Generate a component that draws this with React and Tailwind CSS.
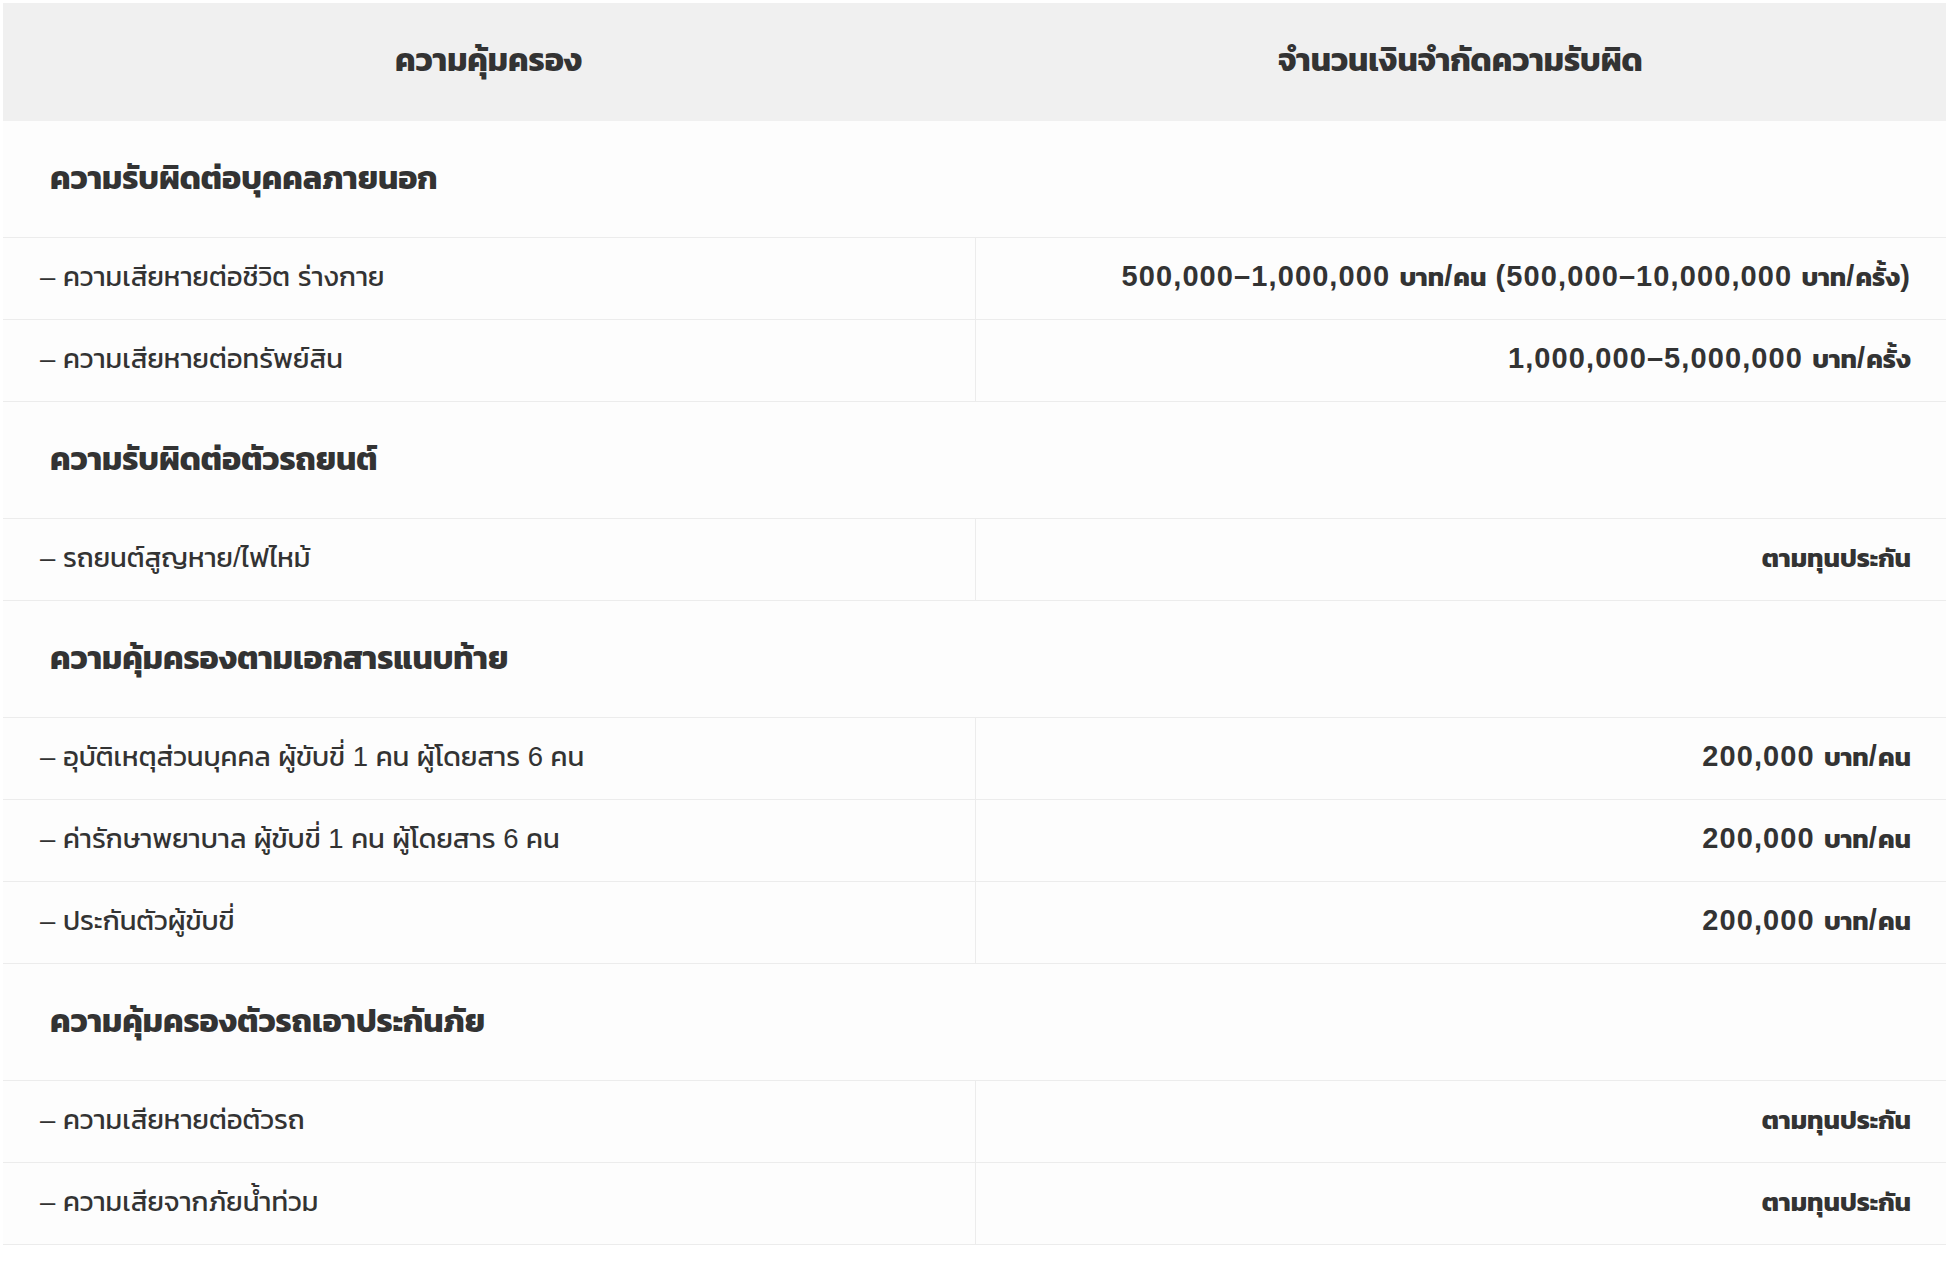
const sections = [
  {
    title: 'ความรับผิดต่อบุคคลภายนอก',
    items: [
      ['– ความเสียหายต่อชีวิต ร่างกาย', '500,000–1,000,000 บาท/คน (500,000–10,000,000 บาท/ครั้ง)'],
      ['– ความเสียหายต่อทรัพย์สิน', '1,000,000–5,000,000 บาท/ครั้ง'],
    ],
  },
  {
    title: 'ความรับผิดต่อตัวรถยนต์',
    items: [['– รถยนต์สูญหาย/ไฟไหม้', 'ตามทุนประกัน']],
  },
  {
    title: 'ความคุ้มครองตามเอกสารแนบท้าย',
    items: [
      ['– อุบัติเหตุส่วนบุคคล ผู้ขับขี่ 1 คน ผู้โดยสาร 6 คน', '200,000 บาท/คน'],
      ['– ค่ารักษาพยาบาล ผู้ขับขี่ 1 คน ผู้โดยสาร 6 คน', '200,000 บาท/คน'],
      ['– ประกันตัวผู้ขับขี่', '200,000 บาท/คน'],
    ],
  },
  {
    title: 'ความคุ้มครองตัวรถเอาประกันภัย',
    items: [
      ['– ความเสียหายต่อตัวรถ', 'ตามทุนประกัน'],
      ['– ความเสียจากภัยน้ำท่วม', 'ตามทุนประกัน'],
    ],
  },
];

// Thai runs are set a little smaller than the digits around them
function Amount({ text }) {
  const parts = text.split(/([\u0E00-\u0E7F]+)/);
  return (
    <span>
      {parts.map((p, i) =>
        /[\u0E00-\u0E7F]/.test(p) ? (
          <span key={i} className="text-[26px] tracking-normal">{p}</span>
        ) : (
          <span key={i}>{p}</span>
        )
      )}
    </span>
  );
}

export default function App() {
  return (
    <div className="min-h-[1268px] bg-white pl-[3px] pr-[2px] pt-[3px] text-[#333333] font-['Liberation_Sans','Kanit',sans-serif]">
      {/* Header */}
      <div className="grid grid-cols-2 h-[118px] bg-[#f0f0f0]">
        <div className="flex items-center justify-center pb-[4px] text-[32px] font-bold">ความคุ้มครอง</div>
        <div className="flex items-center justify-center pb-[4px] text-[32px] font-bold">จำนวนเงินจำกัดความรับผิด</div>
      </div>

      {sections.map((s) => (
        <div key={s.title}>
          <div className="h-[117px] flex items-center pl-[47px] pb-[3px] border-b border-[#ececec] bg-[#fdfdfd] text-[32px] font-bold">
            {s.title}
          </div>
          {s.items.map(([label, value]) => (
            <div key={label} className="grid grid-cols-2 h-[82px] border-b border-[#ececec] bg-[#fdfdfd]">
              <div className="flex items-center pl-[37px] pb-[3px] text-[27.5px]">{label}</div>
              <div className="flex items-center justify-end pr-[35px] pb-[3px] border-l border-[#ececec] text-[29px] tracking-[1.1px] font-bold">
                <Amount text={value} />
              </div>
            </div>
          ))}
        </div>
      ))}
    </div>
  );
}
